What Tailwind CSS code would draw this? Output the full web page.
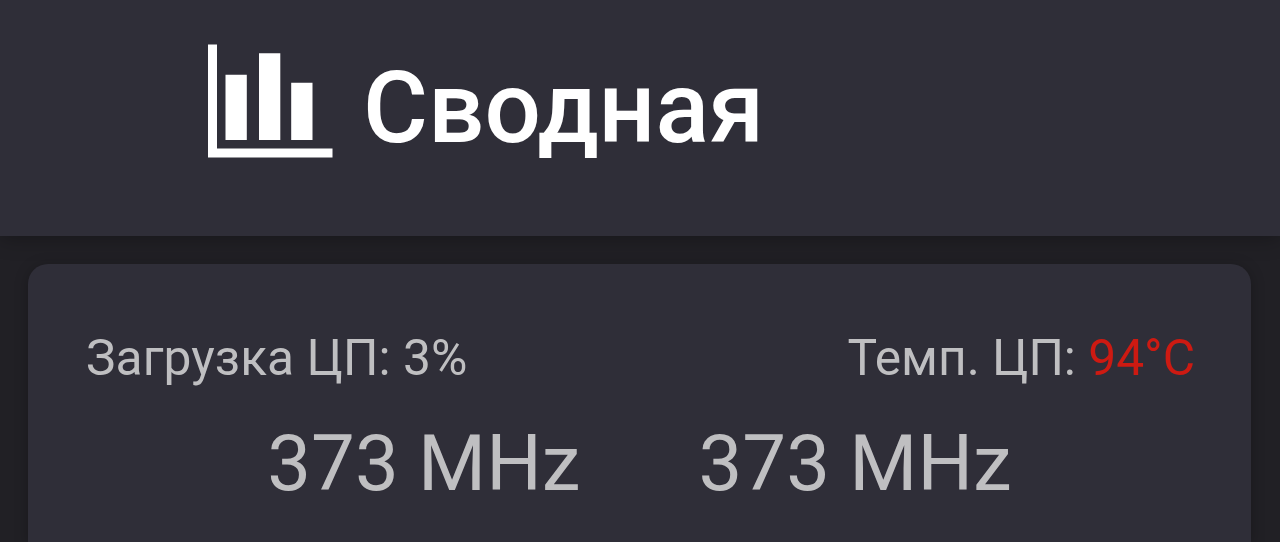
<!DOCTYPE html>
<html lang="ru"><head><meta charset="utf-8"><title>Сводная</title><script src="https://cdn.jsdelivr.net/npm/@tailwindcss/browser@4"></script></head>
<body class="h-[542px] overflow-hidden bg-[#212025] font-['Roboto',sans-serif] text-[#bfbfc1] flex flex-col">
<header class="h-[236px] shrink-0 bg-[#2f2e38] flex items-start pl-[208px] pt-[44px] gap-[30px] text-white shadow-[0_2px_20px_rgba(0,0,0,0.3)]">
<svg class="w-[125px] h-[114px] shrink-0" viewBox="0 0 125 114" fill="currentColor"><path d="M0 .5h9v104h115.5v9H0zM17.5 30.7h21.3V96H17.5zM51 9.2h21.3V96H51zM83.2 38.7h21.3V96H83.2z"/></svg>
<h1 class="text-[99.5px] leading-[120px] font-medium whitespace-nowrap pt-[4px]">Сводная</h1>
</header>
<main class="mt-[28px] ml-[28px] mr-[29px] h-[278px] shrink-0 rounded-t-[20px] bg-[#2f2e38] shadow-[0_2px_14px_rgba(0,0,0,0.25)] pl-[58px] pr-[56px] pt-[65px]">
<div class="flex justify-between text-[49.7px] leading-[58px] whitespace-nowrap"><span class="tracking-[0.06px]">Загрузка ЦП: 3%</span><span>Темп. ЦП: <span class="text-[#cd1a12]">94°C</span></span></div>
<div class="flex justify-center gap-[118px] text-[78px] leading-[92px] mt-[31px] pr-[2px] whitespace-nowrap"><span>373 MHz</span><span>373 MHz</span></div>
</main>
</body></html>
